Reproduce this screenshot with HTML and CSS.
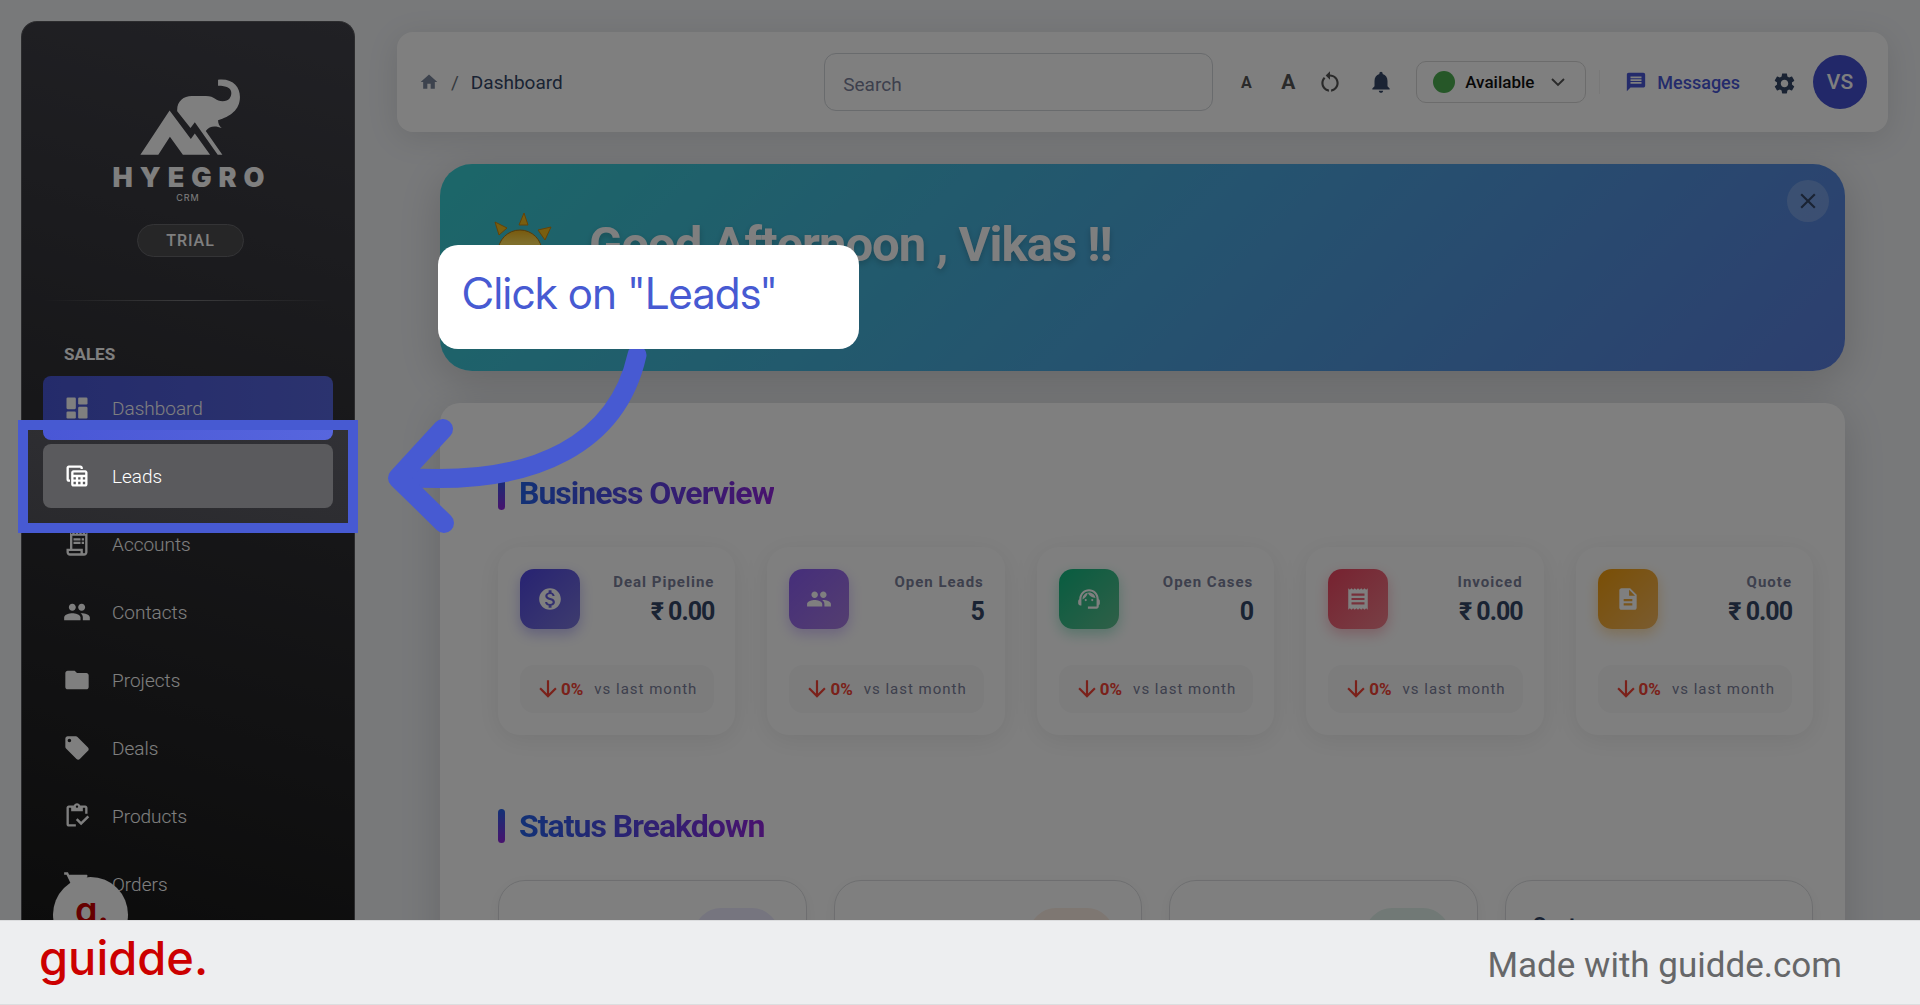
FILE: index.html
```html
<!DOCTYPE html>
<html lang="en">
<head>
<meta charset="utf-8">
<title>Dashboard</title>
<link rel="stylesheet" href="styles.css">
</head>
<body>
<svg class="sprite" aria-hidden="true">
  <symbol id="i-dashboard" viewBox="0 0 24 24"><rect x="3" y="3" width="8" height="10" rx="1"/><rect x="3" y="15" width="8" height="6" rx="1"/><rect x="13" y="3" width="8" height="6" rx="1"/><rect x="13" y="11" width="8" height="10" rx="1"/></symbol>
  <symbol id="i-table" viewBox="0 0 24 24"><path d="M19 7H9c-1.1 0-2 .9-2 2v10c0 1.1.9 2 2 2h10c1.1 0 2-.9 2-2V9c0-1.1-.9-2-2-2zm0 2v2H9V9h10zm-6 6v-2h2v2h-2zm2 2v2h-2v-2h2zm-4-2H9v-2h2v2zm6-2h2v2h-2v-2zm-8 4h2v2H9v-2zm8 2v-2h2v2h-2zM6 17H5c-1.100 0-2-.9-2-2V5c0-1.100.9-2 2-2h10c1.100 0 2 .9 2 2v1h-2V5H5v10h1v2z"/></symbol>
  <symbol id="i-receipt-long" viewBox="0 0 24 24"><path d="M19.500 3.500 18 2l-1.500 1.500L15 2l-1.500 1.500L12 2l-1.500 1.500L9 2 7.500 3.500 6 2v14H3v3c0 1.660 1.340 3 3 3h12c1.660 0 3-1.340 3-3V2l-1.500 1.500zM15 20H6c-.55 0-1-.45-1-1v-1h10v2zm4-1c0 .55-.45 1-1 1s-1-.45-1-1v-3H8V5h11v14z"/><path d="M9 7h6v2H9zM16 7h2v2h-2zM9 10h6v2H9zM16 10h2v2h-2z"/></symbol>
  <symbol id="i-people" viewBox="0 0 24 24"><path d="M16 11c1.660 0 2.990-1.340 2.990-3S17.660 5 16 5c-1.660 0-3 1.340-3 3s1.340 3 3 3zm-8 0c1.660 0 2.990-1.340 2.990-3S9.660 5 8 5C6.340 5 5 6.340 5 8s1.340 3 3 3zm0 2c-2.330 0-7 1.170-7 3.500V19h14v-2.500c0-2.330-4.670-3.500-7-3.500zm8 0c-.29 0-.62.02-.97.05 1.160.84 1.970 1.970 1.970 3.450V19h6v-2.500c0-2.330-4.670-3.500-7-3.500z"/></symbol>
  <symbol id="i-folder" viewBox="0 0 24 24"><path d="M10 4H4c-1.100 0-1.990.9-1.990 2L2 18c0 1.100.9 2 2 2h16c1.100 0 2-.9 2-2V8c0-1.100-.9-2-2-2h-8l-2-2z"/></symbol>
  <symbol id="i-tag" viewBox="0 0 24 24"><path d="M21.410 11.580l-9-9C12.050 2.220 11.550 2 11 2H4c-1.100 0-2 .9-2 2v7c0 .55.22 1.050.59 1.420l9 9c.36.36.86.58 1.410.58.55 0 1.050-.22 1.410-.59l7-7c.37-.36.59-.86.59-1.410 0-.55-.23-1.060-.59-1.420zM5.500 7C4.670 7 4 6.330 4 5.500S4.670 4 5.500 4 7 4.670 7 5.500 6.330 7 5.500 7z"/></symbol>
  <symbol id="i-inventory" viewBox="0 0 24 24"><path d="M5 5h2v3h10V5h2v5h2V5c0-1.100-.9-2-2-2h-4.180C14.400 1.840 13.300 1 12 1s-2.400.84-2.820 2H5c-1.100 0-2 .9-2 2v14c0 1.100.9 2 2 2h6v-2H5V5zm7-2c.55 0 1 .45 1 1s-.45 1-1 1-1-.45-1-1 .45-1 1-1z"/><path d="M21 11.500 15.510 17l-3.010-3-1.500 1.500 4.510 4.500L22.500 13z"/></symbol>
  <symbol id="i-cart" viewBox="0 0 24 24"><path d="M7 18c-1.100 0-1.990.9-1.990 2S5.900 22 7 22s2-.9 2-2-.9-2-2-2zM1 2v2h2l3.600 7.590-1.350 2.450c-.16.28-.25.61-.25.96 0 1.100.9 2 2 2h12v-2H7.420c-.14 0-.25-.11-.25-.25l.03-.12.9-1.630h7.450c.75 0 1.410-.41 1.750-1.030l3.580-6.490c.08-.14.12-.31.12-.48 0-.55-.45-1-1-1H5.210l-.94-2H1zm16 16c-1.100 0-1.990.9-1.990 2s.89 2 1.990 2 2-.9 2-2-.9-2-2-2z"/></symbol>
  <symbol id="i-home" viewBox="0 0 24 24"><path d="M10 20v-6h4v6h5v-8h3L12 3 2 12h3v8z"/></symbol>
  <symbol id="i-reset" viewBox="0 0 24 24"><path d="M12 5V2L8 6l4 4V7c3.310 0 6 2.690 6 6 0 2.970-2.170 5.430-5 5.910v2.020c3.950-.49 7-3.850 7-7.930 0-4.420-3.580-8-8-8zM6 13c0-1.650.67-3.150 1.760-4.240L6.340 7.340C4.900 8.790 4 10.790 4 13c0 4.080 3.050 7.440 7 7.930v-2.020c-2.830-.48-5-2.940-5-5.910z"/></symbol>
  <symbol id="i-bell" viewBox="0 0 24 24"><path d="M12 22c1.100 0 2-.9 2-2h-4c0 1.100.89 2 2 2zm6-6v-5c0-3.070-1.640-5.640-4.500-6.320V4c0-.83-.67-1.500-1.500-1.500s-1.500.67-1.500 1.500v.68C7.630 5.360 6 7.920 6 11v5l-2 2v1h16v-1l-2-2z"/></symbol>
  <symbol id="i-chevron" viewBox="0 0 24 24"><path d="M4 8l8 8 8-8" fill="none" stroke="currentColor" stroke-width="2.500"/></symbol>
  <symbol id="i-message" viewBox="0 0 24 24"><path d="M20 2H4c-1.100 0-1.990.9-1.990 2L2 22l4-4h14c1.100 0 2-.9 2-2V4c0-1.100-.9-2-2-2zM6 9h12v2H6V9zm12 5H6v-2h12v2zm0-6H6V6h12v2z"/></symbol>
  <symbol id="i-gear" viewBox="0 0 24 24"><path d="M19.140 12.940c.04-.3.06-.61.06-.94 0-.32-.02-.64-.07-.94l2.030-1.580c.18-.14.23-.41.12-.61l-1.920-3.320c-.12-.22-.37-.29-.59-.22l-2.390.96c-.5-.38-1.030-.7-1.620-.94l-.36-2.540c-.04-.24-.24-.41-.48-.41h-3.840c-.24 0-.43.17-.47.41l-.36 2.540c-.59.24-1.130.57-1.620.94l-2.390-.96c-.22-.08-.47 0-.59.22L2.740 8.870c-.12.21-.08.47.12.61l2.030 1.580c-.05.3-.09.63-.09.94s.02.64.07.94l-2.030 1.580c-.18.14-.23.41-.12.61l1.920 3.320c.12.22.37.29.59.22l2.390-.96c.5.38 1.030.7 1.620.94l.36 2.540c.05.24.24.41.48.41h3.840c.24 0 .44-.17.47-.41l.36-2.540c.59-.24 1.130-.56 1.620-.94l2.390.96c.22.08.47 0 .59-.22l1.920-3.320c.12-.22.07-.47-.12-.61l-2.010-1.580zM12 15.600c-1.980 0-3.600-1.620-3.600-3.600s1.620-3.600 3.600-3.600 3.600 1.620 3.600 3.600-1.620 3.600-3.600 3.600z"/></symbol>
  <symbol id="i-close" viewBox="0 0 24 24"><path d="M19 6.410 17.590 5 12 10.590 6.410 5 5 6.410 10.590 12 5 17.590 6.410 19 12 13.410 17.590 19 19 17.590 13.410 12z"/></symbol>
  <symbol id="i-money" viewBox="0 0 24 24"><path d="M12 2C6.480 2 2 6.480 2 12s4.480 10 10 10 10-4.480 10-10S17.520 2 12 2zm1.410 16.090V20h-2.670v-1.930c-1.710-.36-3.160-1.460-3.270-3.400h1.960c.1 1.050.82 1.870 2.650 1.870 1.960 0 2.400-.98 2.400-1.590 0-.83-.44-1.610-2.670-2.140-2.480-.6-4.180-1.620-4.180-3.670 0-1.720 1.390-2.840 3.110-3.210V4h2.670v1.950c1.860.45 2.790 1.860 2.850 3.390H14.300c-.05-1.110-.64-1.870-2.220-1.870-1.500 0-2.400.68-2.400 1.640 0 .84.65 1.390 2.670 1.910s4.180 1.390 4.180 3.910c-.01 1.830-1.380 2.830-3.120 3.160z"/></symbol>
  <symbol id="i-support" viewBox="0 0 24 24"><path d="M21 12.220C21 6.730 16.740 3 12 3c-4.690 0-9 3.650-9 9.280-.6.34-1 .98-1 1.720v2c0 1.100.9 2 2 2h1v-6.100c0-3.870 3.130-7 7-7s7 3.130 7 7V19h-8v2h8c1.100 0 2-.9 2-2v-1.220c.59-.31 1-.92 1-1.640v-2.300c0-.7-.41-1.310-1-1.620z"/><circle cx="9" cy="13" r="1"/><circle cx="15" cy="13" r="1"/><path d="M18 11.030C17.520 8.180 15.040 6 12.050 6c-3.030 0-6.290 2.510-6.030 6.450 2.470-1.010 4.330-3.210 4.860-5.890 1.310 2.630 4 4.440 7.120 4.470z"/></symbol>
  <symbol id="i-receipt" viewBox="0 0 24 24"><path d="M18 17H6v-2h12v2zm0-4H6v-2h12v2zm0-4H6V7h12v2zM3 22l1.500-1.500L6 22l1.500-1.500L9 22l1.500-1.500L12 22l1.500-1.500L15 22l1.500-1.500L18 22l1.500-1.500L21 22V2l-1.500 1.500L18 2l-1.500 1.500L15 2l-1.500 1.500L12 2l-1.500 1.500L9 2 7.500 3.500 6 2 4.500 3.500 3 2v20z"/></symbol>
  <symbol id="i-doc" viewBox="0 0 24 24"><path d="M14 2H6c-1.100 0-1.990.9-1.990 2L4 20c0 1.100.89 2 1.990 2H18c1.100 0 2-.9 2-2V8l-6-6zm2 16H8v-2h8v2zm0-4H8v-2h8v2zm-3-5V3.500L18.500 9H13z"/></symbol>
  <symbol id="i-down" viewBox="0 0 24 24"><path d="M20 12l-1.410-1.410L13 16.170V4h-2v12.170l-5.580-5.590L4 12l8 8 8-8z"/></symbol>
</svg>

<div class="app">
  <aside class="sidebar">
    <div class="brand">
      <svg class="brand-mark" viewBox="423 237 302 229" role="img" aria-label="Hyegro logo">
        <path d="M423 465 511 332 575 418 587 401 633 465H551L512 411 477 465Z"/>
        <path d="M534 334C532 305 552 288 578 288H620C648 288 650 304 671 304C690 304 697 291 697 279C697 264 683 257 657 257V239C701 234 723 260 723 291C723 330 693 350 657 361C657 371 661 379 668 385C652 379 632 376 620 394L670 465H656L587 367 574 385Z"/>
      </svg>
      <span class="brand-name">HYEGRO</span>
      <span class="brand-sub">CRM</span>
      <span class="badge">TRIAL</span>
    </div>
    <hr class="divider">
    <h6 class="nav-title">SALES</h6>
    <nav class="nav">
      <a class="nav-item active" href="#"><svg class="icon"><use href="#i-dashboard"/></svg>Dashboard</a>
      <a class="nav-item hover" href="#"><svg class="icon"><use href="#i-table"/></svg>Leads</a>
      <a class="nav-item" href="#"><svg class="icon"><use href="#i-receipt-long"/></svg>Accounts</a>
      <a class="nav-item" href="#"><svg class="icon"><use href="#i-people"/></svg>Contacts</a>
      <a class="nav-item" href="#"><svg class="icon"><use href="#i-folder"/></svg>Projects</a>
      <a class="nav-item" href="#"><svg class="icon"><use href="#i-tag"/></svg>Deals</a>
      <a class="nav-item" href="#"><svg class="icon"><use href="#i-inventory"/></svg>Products</a>
      <a class="nav-item" href="#"><svg class="icon"><use href="#i-cart"/></svg>Orders</a>
    </nav>
  </aside>

  <main class="main">
    <header class="topbar">
      <div class="crumbs">
        <a href="#" aria-label="Home"><svg class="icon home"><use href="#i-home"/></svg></a>
        <span class="slash">/</span>
        <span>Dashboard</span>
      </div>
      <input class="search" type="text" placeholder="Search" aria-label="Search">
      <div class="tools">
        <button class="tool small-a" aria-label="Smaller text">A</button>
        <button class="tool large-a" aria-label="Larger text">A</button>
        <button class="tool" aria-label="Reset text size"><svg class="icon"><use href="#i-reset"/></svg></button>
      </div>
      <button class="tool bell" aria-label="Notifications"><svg class="icon"><use href="#i-bell"/></svg></button>
      <label class="status">
        <span class="dot"></span>
        <select aria-label="Availability"><option>Available</option></select>
        <svg class="icon chevron"><use href="#i-chevron"/></svg>
      </label>
      <span class="sep"></span>
      <a class="messages" href="#"><svg class="icon"><use href="#i-message"/></svg>Messages</a>
      <button class="gear" aria-label="Settings"><svg class="icon"><use href="#i-gear"/></svg></button>
      <button class="avatar">VS</button>
    </header>

    <div class="content">
      <section class="banner">
        <svg class="sun" viewBox="0 0 64 64" aria-hidden="true">
          <defs>
            <linearGradient id="sunFill" x1="0" y1="0" x2="0" y2="1"><stop offset="0" stop-color="#f0b41c"/><stop offset=".3" stop-color="#ffdf5a"/><stop offset="1" stop-color="#f0a010"/></linearGradient>
          </defs>
          <g fill="#f0bc1e" stroke="#c8860f">
            <path d="M33 1 37 13 28 13ZM4 10 16 16 8 23ZM60 15 47 18 54 28ZM4 60 7 49 14 56ZM58 60 46 57 53 50Z"/>
          </g>
          <circle cx="29" cy="40" r="22" fill="url(#sunFill)" stroke="#b5760c"/>
        </svg>
        <h1 class="greeting">Good Afternoon , Vikas !!</h1>
        <button class="close" aria-label="Close"><svg class="icon"><use href="#i-close"/></svg></button>
      </section>

      <section class="panel">
        <h2 class="section-title"><span>Business Overview</span></h2>
        <div class="stats">
          <article class="stat indigo">
            <div class="stat-top"><span class="tile"><svg class="icon"><use href="#i-money"/></svg></span>
              <div class="stat-text"><span class="stat-label">Deal Pipeline</span><strong class="stat-value">₹ 0.00</strong></div></div>
            <p class="trend"><svg class="icon"><use href="#i-down"/></svg><b>0%</b><span>vs last month</span></p>
          </article>
          <article class="stat violet">
            <div class="stat-top"><span class="tile"><svg class="icon"><use href="#i-people"/></svg></span>
              <div class="stat-text"><span class="stat-label">Open Leads</span><strong class="stat-value">5</strong></div></div>
            <p class="trend"><svg class="icon"><use href="#i-down"/></svg><b>0%</b><span>vs last month</span></p>
          </article>
          <article class="stat green">
            <div class="stat-top"><span class="tile"><svg class="icon"><use href="#i-support"/></svg></span>
              <div class="stat-text"><span class="stat-label">Open Cases</span><strong class="stat-value">0</strong></div></div>
            <p class="trend"><svg class="icon"><use href="#i-down"/></svg><b>0%</b><span>vs last month</span></p>
          </article>
          <article class="stat red">
            <div class="stat-top"><span class="tile"><svg class="icon"><use href="#i-receipt"/></svg></span>
              <div class="stat-text"><span class="stat-label">Invoiced</span><strong class="stat-value">₹ 0.00</strong></div></div>
            <p class="trend"><svg class="icon"><use href="#i-down"/></svg><b>0%</b><span>vs last month</span></p>
          </article>
          <article class="stat amber">
            <div class="stat-top"><span class="tile"><svg class="icon"><use href="#i-doc"/></svg></span>
              <div class="stat-text"><span class="stat-label">Quote</span><strong class="stat-value">₹ 0.00</strong></div></div>
            <p class="trend"><svg class="icon"><use href="#i-down"/></svg><b>0%</b><span>vs last month</span></p>
          </article>
        </div>

        <h2 class="section-title second"><span>Status Breakdown</span></h2>
        <div class="breakdown">
          <article class="slot"><span class="chip lilac"></span></article>
          <article class="slot"><span class="chip peach"></span></article>
          <article class="slot"><span class="chip mint"></span></article>
          <article class="slot"><h3 class="slot-title">Customer</h3></article>
        </div>
      </section>
    </div>
  </main>

  <div class="widget">g.</div>
  <div class="spotlight"></div>
  <svg class="arrow" viewBox="380 340 280 200" aria-hidden="true">
    <path d="M637 355C618 440 540 488 400 477" stroke-width="19"/>
    <path d="M443 429 398 478 444 523" stroke-width="20"/>
  </svg>
  <div class="callout">Click on "Leads"</div>
</div>

<footer class="footer">
  <a class="footer-logo" href="#">guidde.</a>
  <span class="footer-note">Made with guidde.com</span>
</footer>
</body>
</html>
```
FILE: styles.css
```css
* { box-sizing: border-box; }

body {
  margin: 0;
  height: 100vh;
  display: flex;
  flex-direction: column;
  overflow: hidden;
  background: #f0f2f5;
  color: #344767;
  font-family: Roboto, "Noto Sans", sans-serif;
  font-size: 19px;
}

a { color: inherit; text-decoration: none; }
button { border: 0; padding: 0; background: none; font: inherit; color: inherit; }
h1, h2, h3, h6, p { margin: 0; }
.sprite { display: none; }
.icon { width: 26px; height: 26px; flex: none; fill: currentColor; display: block; }

.app {
  position: relative;
  flex: 1;
  min-height: 0;
  overflow: hidden;
  display: flex;
  gap: 42px;
  padding: 0 32px 0 21px;
}

/* Sidebar */
.sidebar {
  flex: 0 0 334px;
  margin-top: 21px;
  padding: 0 22px;
  border: 1px solid #58585c;
  border-bottom: 0;
  border-radius: 16px 16px 0 0;
  background: linear-gradient(195deg, #42424a, #191919);
  color: #fff;
}
.brand { display: flex; flex-direction: column; align-items: center; padding-top: 57px; }
.brand-mark { width: 101px; height: 76px; fill: #fff; margin-left: 5px; }
.brand-name { margin: 8px 0 0 8px; font: 900 27px/30px Inter, sans-serif; letter-spacing: 7px; }
.brand-sub { font: 400 9px/10px Inter, sans-serif; letter-spacing: 1px; }
.badge {
  margin: 21px 0 0 5px;
  width: 107px;
  border: 1px solid #68686c;
  border-radius: 17px;
  background: #4c4c4f;
  font-size: 16px;
  font-weight: 500;
  line-height: 31px;
  letter-spacing: 1px;
  text-align: center;
}
.divider {
  height: 1px;
  margin: 43px 0 43px;
  border: 0;
  background: linear-gradient(90deg, transparent, #77777a, transparent);
}
.nav-title { padding-left: 20px; font-size: 17px; line-height: 20px; font-weight: 700; }
.nav { display: flex; flex-direction: column; gap: 4px; margin: 12px -1px 0; }
.nav-item {
  display: flex;
  align-items: center;
  gap: 21px;
  height: 64px;
  padding-left: 20px;
  border-radius: 8px;
  font-weight: 300;
}
.nav-item .icon { width: 28px; height: 28px; }
.nav-item.active { background: linear-gradient(90deg, #4957d6, #5766de); }
.nav-item.hover { background: #5a5a5d; }

/* Top bar */
.main { flex: 1; min-width: 0; padding-top: 32px; }
.topbar {
  display: flex;
  align-items: center;
  height: 100px;
  padding: 0 21px 0 22px;
  border-radius: 16px;
  background: #fff;
  box-shadow: 0 6px 32px rgba(0, 0, 0, .1);
}
.crumbs { display: flex; align-items: center; gap: 12px; }
.home { width: 20px; height: 20px; color: #7b879c; }
.slash { color: #6c757d; }
.search {
  width: 389px;
  height: 58px;
  margin: 0 12px 0 auto;
  padding: 4px 18px 0;
  border: 1px solid #d2d6da;
  border-radius: 12px;
  background: none;
  font: inherit;
}
.search::placeholder { color: #7b809a; opacity: 1; }
.tools { display: flex; }
.tool { width: 42px; height: 42px; display: grid; place-items: center; color: #555; }
.small-a { font-size: 16px; font-weight: 700; }
.large-a { font-size: 21px; font-weight: 700; }
.bell { margin: 0 14px 0 9px; color: #344767; }
.status {
  display: flex;
  align-items: center;
  height: 42px;
  padding: 0 18px 0 16px;
  border: 1px solid #d8d8d8;
  border-radius: 10px;
}
.dot { width: 22px; height: 22px; border-radius: 50%; background: #4caf50; }
.status select {
  appearance: none;
  width: 94px;
  padding: 0 0 0 10px;
  border: 0;
  background: none;
  color: #111;
  font: 500 17px/20px Roboto, sans-serif;
}
.chevron { width: 18px; height: 18px; color: #555; }
.sep { width: 1px; height: 24px; margin: 0 25px 0 13px; background: #f0f0f0; }
.messages { display: flex; align-items: center; gap: 10px; color: #4957d6; font-size: 18px; font-weight: 500; }
.messages .icon { width: 22px; height: 22px; }
.gear { margin: 2px 16px 0 32px; color: #344767; }
.gear .icon { width: 25px; height: 25px; }
.avatar { width: 54px; height: 54px; border-radius: 50%; background: #4450d2; color: #fff; font-size: 21px; font-weight: 500; }

/* Greeting banner */
.content { padding: 32px 43px 0; display: flex; flex-direction: column; gap: 32px; }
.banner {
  display: flex;
  align-items: flex-start;
  height: 207px;
  padding: 16px 16px 0 51px;
  border-radius: 32px;
  background: linear-gradient(135deg, #38ced2, #4aa8de 50%, #5a7ede);
  box-shadow: 0 10px 42px rgba(0, 0, 0, .16);
}
.sun { width: 64px; height: 64px; margin-top: 32px; }
.greeting {
  flex: 1;
  margin: 37px 0 0 34px;
  color: #fff;
  font-size: 49px;
  font-weight: 700;
  line-height: 56px;
  letter-spacing: -1px;
  text-shadow: 0 3px 6px rgba(0, 0, 0, .2);
}
.close { width: 42px; height: 42px; border-radius: 50%; background: rgba(255, 255, 255, .2); display: grid; place-items: center; }

/* Main panel */
.panel {
  min-height: 560px;
  padding: 73px 32px 0 58px;
  border-radius: 20px;
  background: #fff;
  box-shadow: 0 10px 42px rgba(0, 0, 0, .14);
}
.section-title { display: flex; align-items: center; gap: 14px; height: 34px; margin-bottom: 37px; font-size: 32px; line-height: 34px; font-weight: 700; letter-spacing: -1px; }
.section-title.second { margin-top: 74px; }
.section-title::before { content: ""; width: 7px; height: 34px; border-radius: 4px; background: linear-gradient(#2563eb, #9125dd); }
.section-title span { background: linear-gradient(90deg, #2563eb, #9125dd); background-clip: text; color: transparent; }

.stats { display: grid; grid-template-columns: repeat(5, 1fr); gap: 32px; }
.stat { height: 188px; padding: 22px 21px 22px 22px; border-radius: 22px; background: #fff; box-shadow: 0 5px 27px rgba(0, 0, 0, .08); }
.stat-top { display: flex; justify-content: space-between; }
.tile { width: 60px; height: 60px; border-radius: 14px; display: grid; place-items: center; color: #fff; }
.stat-text { display: flex; flex-direction: column; align-items: flex-end; padding-top: 3px; }
.stat-label { color: #7b809a; font-size: 15px; line-height: 20px; font-weight: 700; letter-spacing: 1px; }
.stat-value { font-size: 25px; line-height: 40px; font-weight: 700; letter-spacing: -1px; }
.trend {
  display: flex;
  align-items: center;
  justify-content: center;
  height: 48px;
  margin-top: 33px;
  padding-right: 2px;
  border-radius: 14px;
  background: #f8f8f9;
  color: #7b809a;
  font-size: 15px;
  letter-spacing: 1px;
}
.trend .icon, .trend b { color: #f44335; }
.trend b { font-size: 17px; letter-spacing: 0; margin-right: 11px; font-weight: 700; }
.indigo .tile { background: linear-gradient(135deg, #4f46e5, #7c78dc); box-shadow: 0 5px 14px rgba(79, 70, 229, .35); }
.violet .tile { background: linear-gradient(135deg, #8b5cf6, #a87ce0); box-shadow: 0 5px 14px rgba(139, 92, 246, .35); }
.green .tile { background: linear-gradient(135deg, #10b981, #60c090); box-shadow: 0 5px 14px rgba(16, 185, 129, .35); }
.red .tile { background: linear-gradient(135deg, #ef4460, #f0808c); box-shadow: 0 5px 14px rgba(239, 68, 96, .35); }
.amber .tile { background: linear-gradient(135deg, #f59e0b, #f5b860); box-shadow: 0 5px 14px rgba(245, 158, 11, .35); }

.breakdown { display: grid; grid-template-columns: repeat(4, 1fr); gap: 27px; }
.slot { display: flex; justify-content: flex-end; height: 180px; padding: 27px; border: 1px solid #dcdde0; border-radius: 27px; box-shadow: 0 3px 16px rgba(0, 0, 0, .05); }
.chip { width: 85px; height: 85px; border-radius: 27px; }
.lilac { background: #ecebff; }
.peach { background: #fdeee4; }
.mint { background: #e2f3ec; }
.slot-title { flex: 1; font-size: 21px; line-height: 34px; font-weight: 700; }

/* Guide layer drawn over the app */
.widget {
  position: absolute;
  left: 53px;
  top: 877px;
  width: 75px;
  height: 75px;
  padding-left: 3px;
  border-radius: 50%;
  background: #fff;
  color: #c00;
  font: 600 36px/66px Inter, sans-serif;
  text-align: center;
}
.spotlight {
  position: absolute;
  left: 18px;
  top: 420px;
  width: 340px;
  height: 113px;
  border: 10px solid #475ad2;
  box-shadow: 0 0 0 2000px rgba(0, 0, 0, .5);
}
.arrow { position: absolute; left: 380px; top: 340px; width: 280px; height: 200px; fill: none; stroke: #475ad2; stroke-linecap: round; stroke-linejoin: round; }
.callout {
  position: absolute;
  left: 438px;
  top: 245px;
  width: 421px;
  height: 104px;
  padding: 20px 24px;
  border-radius: 20px;
  background: #fff;
  color: #475ad2;
  font: 400 44px/56px "Inter Display", Inter, sans-serif;
  font-variation-settings: "opsz" 32;
}

/* Footer */
.footer {
  display: flex;
  align-items: center;
  justify-content: space-between;
  flex: 0 0 85px;
  padding: 0 78px 0 39px;
  border: solid #dcdddf;
  border-width: 1px 0;
  background: #edeef0;
}
.footer-logo { padding-bottom: 10px; color: #c00; font: 500 47px/56px Inter, sans-serif; }
.footer-note { padding-top: 6px; color: #666769; font-size: 35px; line-height: 42px; }
```
